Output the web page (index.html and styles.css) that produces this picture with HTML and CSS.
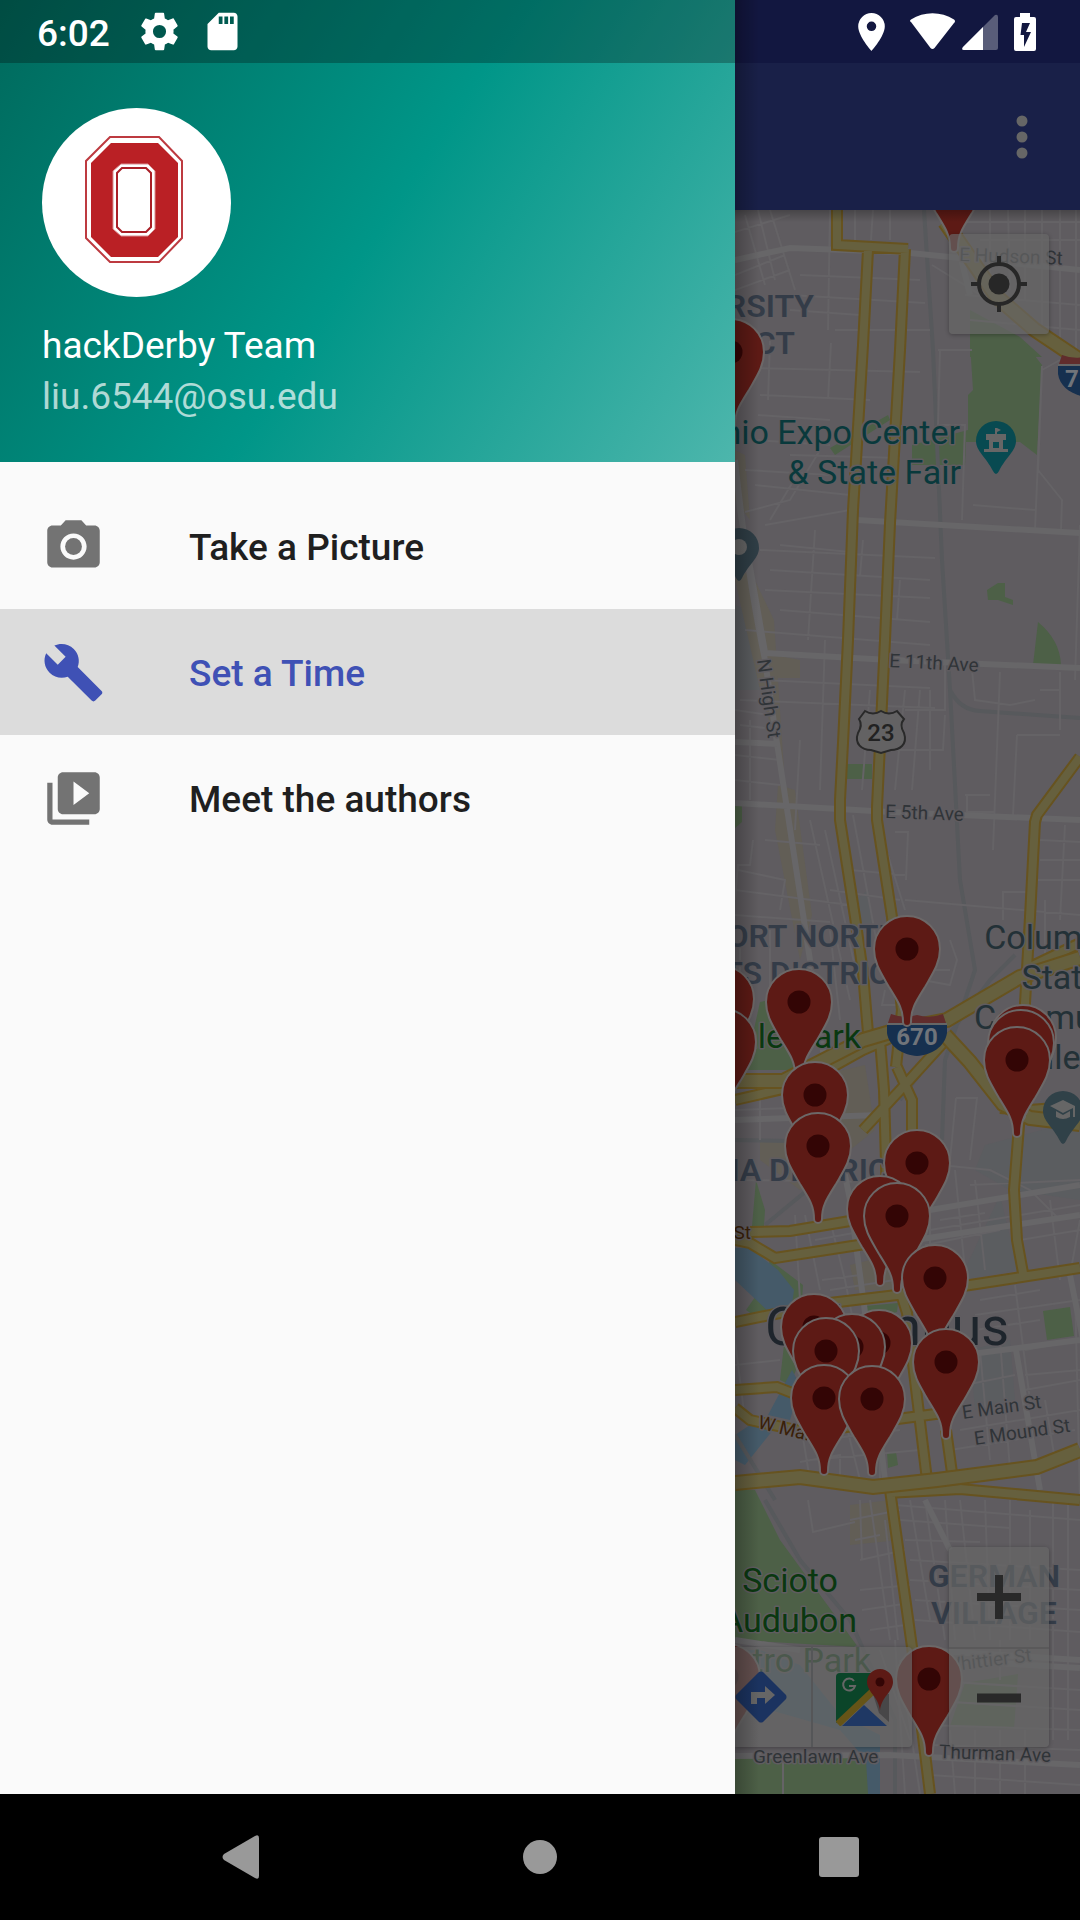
FILE: index.html
```html
<!DOCTYPE html>
<html lang="en">
<head>
<meta charset="utf-8">
<meta name="viewport" content="width=device-width, initial-scale=1">
<title>hackDerby</title>
<link rel="stylesheet" href="styles.css">
</head>
<body>
<div class="screen">
  <div class="status-bar">
    <div class="status-left">
      <span class="clock">6:02</span>
      <svg class="status-icon" viewBox="0 0 24 24"><path d="M19.4 13c0-.3.1-.6.1-1s0-.7-.1-1l2.100-1.650c.2-.15.25-.42.12-.64l-2-3.460c-.12-.22-.39-.3-.61-.22l-2.490 1c-.52-.4-1.080-.73-1.690-.98l-.38-2.650A.49.49 0 0 0 14 2h-4c-.25 0-.46.18-.49.42l-.38 2.650c-.61.25-1.170.59-1.690.98l-2.490-1c-.23-.09-.49 0-.61.22l-2 3.460c-.13.22-.07.49.12.64L4.570 11c-.04.32-.07.65-.07 1s.03.66.07 1l-2.110 1.650c-.19.15-.24.42-.12.64l2 3.460c.12.22.39.3.61.22l2.490-1c.52.4 1.080.73 1.690.98l.38 2.650c.03.24.24.42.49.42h4c.25 0 .46-.18.49-.42l.38-2.650c.61-.25 1.170-.59 1.690-.98l2.490 1c.23.09.49 0 .61-.22l2-3.460c.12-.22.07-.49-.12-.64zM12 15.500a3.500 3.500 0 1 1 0-7 3.500 3.500 0 0 1 0 7z"/></svg>
      <svg class="status-icon" viewBox="0 0 24 24"><path d="M18 2h-8L4 8v12c0 1.100.9 2 2 2h12c1.100 0 2-.9 2-2V4c0-1.100-.9-2-2-2zm-6 6h-2V4h2v4zm3 0h-2V4h2v4zm3 0h-2V4h2v4z"/></svg>
    </div>
    <div class="status-right">
      <svg width="27" height="38" viewBox="5 2 14 20"><path d="M12 2a7 7 0 0 0-7 7c0 5.250 7 13 7 13s7-7.750 7-13a7 7 0 0 0-7-7zm0 9.500a2.500 2.500 0 1 1 0-5 2.500 2.500 0 0 1 0 5z"/></svg>
      <svg class="wifi" width="45" height="37" viewBox="0 0 45 37"><path d="M1 9Q-1 8 1 6.500C14-2 31-2 44 6.500Q46 8 44 10L24.500 35Q22.500 37 20.500 35z"/></svg>
      <svg class="signal" width="36" height="36" viewBox="0 0 36 36"><path opacity=".3" d="M1 33L33 1Q36 0 36 3V34Q36 36 34 36H2Q-1 36 1 33z"/><path d="M1 33L21 13V36H2Q-1 36 1 33z"/></svg>
      <svg class="battery" width="22" height="38" viewBox="0 0 22 38"><path fill-rule="evenodd" d="M6 0H16V4H20Q22 4 22 6V36Q22 38 20 38H2Q0 38 0 36V6Q0 4 2 4H6zM8 10L6.500 22H10V34L17 19H12L16 10z"/></svg>
    </div>
  </div>

  <div class="body">
    <nav class="drawer">
      <header class="drawer-header">
        <svg class="avatar" viewBox="0 0 189 189" role="img" aria-label="Profile picture">
          <circle cx="94.500" cy="94.500" r="94.500" fill="#fff"/>
          <path d="M68 29H117L140 53V130L117 154H68L44 130V53z" fill="#fff" stroke="#bd3a40" stroke-width="2"/>
          <path d="M69 35H116L136 55V129L116 149H69L49 129V55z" fill="#ba2025"/>
          <path d="M79 56H106L113 63V121L106 128H79L71 121V63z" fill="#fff" stroke="#d98b8e" stroke-width="1"/>
          <path d="M80 60H104L109 65V119L104 124H80L75 119V65z" fill="#fff" stroke="#a91f27" stroke-width="2"/>
        </svg>
        <div class="name">hackDerby Team</div>
        <div class="email">liu.6544@osu.edu</div>
      </header>
      <div class="menu">
        <a class="item" href="#picture">
          <svg viewBox="0 0 24 24"><circle cx="12" cy="12" r="3.200"/><path d="M9 2L7.170 4H4c-1.100 0-2 .9-2 2v12c0 1.100.9 2 2 2h16c1.100 0 2-.9 2-2V6c0-1.100-.9-2-2-2h-3.170L15 2H9zm3 15c-2.760 0-5-2.240-5-5s2.240-5 5-5 5 2.240 5 5-2.240 5-5 5z"/></svg>
          <span>Take a Picture</span></a>
        <a class="item selected" href="#time" aria-current="page">
          <svg viewBox="0 0 24 24"><path d="M22.700 19l-9.100-9.100c.9-2.300.4-5-1.500-6.900-2-2-5-2.400-7.400-1.300L9 6 6 9 1.600 4.700C.4 7.100.9 10.100 2.900 12.100c1.900 1.900 4.600 2.400 6.900 1.500l9.100 9.100c.4.4 1 .4 1.400 0l2.300-2.300c.5-.4.5-1.100.1-1.400z"/></svg>
          <span>Set a Time</span></a>
        <a class="item" href="#authors">
          <svg viewBox="0 0 24 24"><path d="M4 6H2v14c0 1.100.9 2 2 2h14v-2H4V6zm16-4H8c-1.100 0-2 .9-2 2v12c0 1.100.9 2 2 2h12c1.100 0 2-.9 2-2V4c0-1.100-.9-2-2-2zm-8 12.500v-9l6 4.500-6 4.500z"/></svg>
          <span>Meet the authors</span></a>
      </div>
    </nav>

    <main class="content">
      <div class="app-bar">
        <button class="overflow" aria-label="More options"><svg width="12" height="44" viewBox="0 0 12 44"><circle cx="6" cy="6" r="5.500"/><circle cx="6" cy="22" r="5.500"/><circle cx="6" cy="38" r="5.500"/></svg></button>
      </div>
      <div class="map">
        <svg class="map-canvas" viewBox="735 210 345 1584" preserveAspectRatio="xMinYMin slice">
          <defs>
            <g id="pin"><path d="M-33 0A33 33 0 0 1 33 0C33 14 26 24 18 38C8 54 4 60 4 73A4 4 0 0 1-4 73C-4 60-8 54-18 38C-26 24-33 14-33 0Z" fill="#5d1a15" stroke="#6c6868" stroke-width="2"/><circle r="11.500" fill="#330505"/></g>
            <g id="poi"><path d="M-20 0A20 20 0 0 1 20 0C20 10 10 16 3 30Q0 36-3 30C-10 16-20 10-20 0Z"/></g>
            <g id="shield"><path d="M-30-11H30V-2C28 12 14 20 0 21C-14 20-28 12-30-2Z" fill="#16304f"/><path d="M-29-12L-26-21Q-13-16 0-20Q13-16 26-21L29-12Z" fill="#602c2c"/><path d="M-30-11H30" stroke="#666" stroke-width="2"/></g>
          </defs>

          <!-- land use -->
          <g class="area">
            <path fill="#5b5d60" d="M735 605L752 612 765 690H735zM985 1145L1080 1120V1200L1010 1190 975 1170zM1000 1195L1013 1250 1020 1270 960 1280zM970 1350L1010 1340 1015 1400 975 1410zM855 900L868 890 872 930 858 935z"/>
            <path fill="#625e56" d="M735 450L745 455 750 520 735 500zM735 580L750 570 774 620 784 770 760 690zM775 655L800 660V678H778zM778 785L795 790 812 915 800 960 775 830zM800 1080L865 1065 875 1130 800 1190 760 1160V1140H795zM850 1265L890 1255 895 1290H855zM850 1505L890 1500 900 1540 850 1545z"/>
            <path fill="#4d6047" d="M970 343L990 337H1020L1042 365 1037 455 1020 442H966L965 465H912V445L968 430V395L973 390zM987 590L998 583H1005V597L1013 600V605L998 600H988zM1038 622Q1060 640 1061 665H1033zM847 764H872V779H847zM735 806H742V822L735 828zM760 1002L770 1000 797 1070H745zM756 1180L765 1210 764 1226H752zM770 1260L803 1285 802 1300 780 1305 760 1320 746 1310 760 1290zM865 1306L898 1303 897 1312 866 1320zM784 1345L798 1365 790 1385 780 1380zM1043 1311L1070 1307 1074 1336 1047 1340zM887 1452H896L898 1465 888 1468zM735 1490H755L780 1540 858 1647 735 1640zM735 1758H870V1794H735zM965 1683L1018 1674 1014 1729 950 1726zM830 448L888 415 890 420 835 455zM970 310L1020 337 1042 357H970z"/>
            <path fill="#455a69" d="M735 1248H750L778 1270 794 1290 792 1305 770 1313 735 1280zM776 1400L792 1370 800 1385 790 1420 768 1415zM735 1435L750 1425 773 1430 745 1465 735 1460zM735 1650H760L800 1665 840 1715 880 1735V1794H868L866 1760 840 1730 735 1700z"/>
          </g>

          <!-- rail lines -->
          <path class="rail" d="M924 210L933 350 942 560 950 690 960 880 975 970 945 1060 942 1140M950 690Q960 710 980 711L1080 718M735 1140L790 1141 830 1160M735 1435L775 1500M1015 955L990 980 900 1100M765 1500L800 1560 850 1620 895 1720V1794M765 1225L805 1192"/>

          <!-- side streets -->
          <path class="minor" d="M735 232L790 215M735 262L770 250M735 290L790 270M745 215L765 285M758 210L775 280M770 210L795 290M735 275L785 255M790 455L900 458M790 310L860 315M800 275L920 280M790 295L925 303M830 210L828 330M855 210V240M873 210L871 240M890 210V240M835 330H930M831 343L828 400M770 340L768 400M755 368L920 372M760 395L870 400M758 415L830 420M755 440L830 445M745 470L830 475M755 485L850 495M745 512L790 500 820 450M770 520L800 470M765 525L850 510M780 545L850 552M760 550L935 558M770 570L930 580M765 590L930 598M780 610L930 622M745 630L930 645M760 680L930 688M740 700L935 708M815 530L808 640M863 540L860 576M900 580L897 620M825 640L820 790M870 690L862 790M905 690L895 790M920 690L912 790M930 690L930 770M880 655L945 665V710H905M895 750H943L945 715M940 350L938 425H965L962 520M938 350H972M1042 366L1035 530M1060 360L1042 370 1038 470 1062 500 1061 530M1080 525L1075 680M973 505L1035 510M972 670L975 700 1010 705 1035 700M1000 672L993 850M1060 672V730M1017 735H1060M1017 735L1013 815M965 795H990M967 812H995M967 795V812M1040 690H1060M735 710L770 715M740 725L765 728M735 755L780 760M735 780L780 785M750 720V800M800 740L795 830M765 840L820 845M753 840L750 865H738L735 900M738 870L785 880 780 910M735 890L850 905M735 915L830 922M810 820L850 1000M825 830L860 990M853 815L880 960M880 830L905 910M895 832H908L906 880M850 870L905 875M830 890L900 900M905 900L1080 915M1040 840L1080 842M1040 860H1080M1038 880H1080M1065 825L1060 920M1003 920V892H1030M1045 960V900M740 940V1000M770 930V1010M830 930L840 1020M950 940L957 960 950 985 895 975M885 990L882 1005H900M950 970H895M760 1095V1140M795 1095V1120M735 1110L790 1108M735 1180L880 1182M956 1098H977L970 1160M956 1098L950 1160M940 1165L990 1170 1030 1190 1060 1220M970 1185L1080 1180M930 1165V1270M955 1170L965 1270M975 1180L985 1270M930 1230L1080 1205M925 1245L1000 1230M940 1220L985 1213M1050 1200L1060 1280M1080 1220L1070 1275M1020 1240L1080 1230M830 1220L845 1280 855 1330M805 1215L820 1290M795 1215L800 1300M815 1240L870 1230M825 1255L880 1245M822 1280L860 1275M830 1290L895 1280M980 1300L1040 1290M975 1315L1080 1300M975 1330L1040 1320M1025 1350L1080 1340M1025 1375L1080 1370M1025 1390L1080 1380M965 1385L1015 1375M1075 1290L1080 1500M980 1350L990 1460M1000 1340L1010 1470M1045 1400L1055 1460M1015 1285L1030 1400M960 1430L1080 1410M950 1450L1075 1430M735 1340L745 1420M800 1420L810 1480M820 1440L900 1430M810 1460L920 1450M845 1420L860 1480M880 1420V1480M800 1462L840 1455V1480M735 1365L780 1360"/>
          <path class="minor" d="M808 1500L813 1532 855 1522M855 1540L880 1535M850 1520L900 1510M860 1560L905 1550M860 1500L862 1560M870 1500L890 1640M885 1520L898 1640M860 1590L910 1585M862 1610L910 1603M870 1630L905 1625M895 1505L1080 1520M900 1520L1010 1528M905 1540L980 1542M910 1560L1080 1570M910 1580L1080 1590M915 1600L1080 1610M915 1620L1080 1632M920 1680L1080 1690M920 1700L1080 1710M925 1725L1080 1730M930 1745L1080 1750M930 1775L1080 1785M910 1500L930 1620M925 1500L945 1640M945 1500L955 1640M960 1500L975 1640M985 1500L990 1640M1010 1500V1640M1030 1510V1640M1053 1500V1740M1068 1500V1740M1000 1640V1680M975 1730V1794M1000 1730V1794M1025 1730V1794M950 1730L955 1794M900 1660L920 1794M895 1640L905 1794M880 1650L910 1740M783 1760V1794M932 265L1070 350M965 295L1080 305M970 320L1080 330M990 210V290M1008 210L1010 290M1025 210V300M1042 210V340M1060 210V350M1076 210V350M960 222H1080M980 240H1080"/>
          <path class="street" d="M735 460Q748 580 765 660L775 730 810 960 830 1100 850 1200 870 1350 885 1480M735 460L740 510 765 652M735 260L790 248 900 252 1080 270M857 520L1080 533M765 653L890 660 1080 668M735 742L778 744M735 803L890 812 1080 820M735 1120L880 1115M900 1215L1080 1185M915 1240L1080 1215M925 1360L1080 1340M1070 1275L1085 1350M735 1756L890 1755 1080 1765M920 1650L1080 1660M925 1500L950 1550M1016 1350L1040 1490M945 1660L1080 1668M735 1640L800 1650M943 213L953 225 970 295"/>

          <!-- highways: casing, then fill -->
          <g class="highway">
            <path id="hw" d="M837 210V245L908 249M868 250L863 345 853 510 848 640 843 743 840 800V820L855 917 863 973 868 1033M905 249L900 350 890 523 885 640 877 807V820L892 917 902 1010 896 1067M1080 757L1037 815 1035 822 1030 917 1025 1003 1020 1113 1014 1190 1017 1240 1023 1273M735 1100L800 1085 863 1050 897 1035M880 1040L884 1090 887 1200M943 1043L903 1087 863 1130M897 1067L912 1100V1140M750 1232L790 1231 850 1221M735 1240L750 1243 775 1258 865 1244M735 1322L830 1303 897 1295 970 1285 1080 1268M902 1297L907 1313 917 1397 927 1480M735 1390L777 1387 810 1400M735 1408L750 1420 810 1433 890 1420 943 1413M946 1430L953 1480M887 1493L960 1489 1080 1500M890 1490L912 1647 930 1794M1000 1108L1030 1110 1080 1106M1030 967L1080 943"/>
          </g>
          <g class="highway inner"><use href="#hw"/></g>
          <path class="freeway-case" d="M945 222L997 297 1035 330 1080 360M735 1081L783 1081 863 1040 897 1030 947 1020 1020 977 1080 958M945 1035L970 1062 1003 1104 1030 1118 1080 1124M735 1483L800 1477 873 1487 937 1480 1037 1467 1080 1450"/>
          <path class="freeway" d="M945 222L997 297 1035 330 1080 360M735 1081L783 1081 863 1040 897 1030 947 1020 1020 977 1080 958M945 1035L970 1062 1003 1104 1030 1118 1080 1124M735 1483L800 1477 873 1487 937 1480 1037 1467 1080 1450"/>

          <!-- labels -->
          <g class="label district">
            <text x="814" y="317" text-anchor="end">UNIVERSITY</text>
            <text x="795" y="354" text-anchor="end">DISTRICT</text>
            <text x="901" y="947" text-anchor="end">SHORT NORTH</text>
            <text x="909" y="984" text-anchor="end">ARTS DISTRICT</text>
            <text x="908" y="1181" text-anchor="end">ARENA DISTRICT</text>
            <text x="994" y="1587" text-anchor="middle">GERMAN</text>
            <text x="994" y="1624" text-anchor="middle">VILLAGE</text>
          </g>
          <g class="label place expo">
            <text x="960" y="444" text-anchor="end">Ohio Expo Center</text>
            <text x="961" y="484" text-anchor="end">&amp; State Fair</text>
          </g>
          <g class="label place park">
            <text x="861" y="1048" text-anchor="end">Goodale Park</text>
            <text x="838" y="1592" text-anchor="end">Scioto</text>
            <text x="857" y="1632" text-anchor="end">Audubon</text>
            <text x="871" y="1672" text-anchor="end">Metro Park</text>
          </g>
          <g class="label place college">
            <text x="1061" y="949" text-anchor="middle">Columbus</text>
            <text x="1061" y="989" text-anchor="middle">State</text>
            <text x="1061" y="1029" text-anchor="middle">Community</text>
            <text x="1061" y="1069" text-anchor="middle">College</text>
          </g>
          <text class="label city" x="765" y="1345">Columbus</text>
          <g class="label road">
            <text transform="translate(959 261) rotate(2)">E Hudson St</text>
            <text transform="translate(889 667) rotate(3)">E 11th Ave</text>
            <text transform="translate(885 818) rotate(2)">E 5th Ave</text>
            <text transform="translate(757 660) rotate(82)">N High St</text>
            <text transform="translate(963 1419) rotate(-8)">E Main St</text>
            <text transform="translate(975 1445) rotate(-8)">E Mound St</text>
            <text transform="translate(945 1672) rotate(-7)">Whittier St</text>
            <text x="753" y="1763">Greenlawn Ave</text>
            <text transform="translate(939 1758) rotate(2)">Thurman Ave</text>
          </g>
          <g class="label road major">
            <text x="751" y="1239" text-anchor="end">W Broad St</text>
            <text transform="translate(757 1428) rotate(14)">W Main</text>
          </g>

          <!-- route shields -->
          <use href="#shield" x="917" y="1035"/>
          <text class="shield-text" x="917" y="1045" text-anchor="middle">670</text>
          <use href="#shield" x="1088" y="376"/>
          <text class="shield-text" x="1065" y="387">71</text>
          <path d="M859 719L865 711Q873 716 881 711Q889 716 897 711L904 719Q899 725 904 733C908 745 899 750 891 750L881 753 871 750C862 750 854 744 858 733Q863 725 859 719Z" fill="#636263" stroke="#292929" stroke-width="2"/>
          <text class="us-route" x="881" y="741" text-anchor="middle">23</text>

          <!-- points of interest -->
          <use href="#poi" x="996" y="441" fill="#084a51"/>
          <path d="M995 428V434H986V440H989V449H984V452H1008V449H1003V440H1006V434H997V432L1001 430 997 428zM993 442H999V448H993z" fill="#666" fill-rule="evenodd"/>
          <use href="#poi" x="739" y="548" fill="#2f3e46"/><circle cx="739" cy="547" r="8" fill="#666"/>
          <use href="#poi" x="1063" y="1111" fill="#304148"/>
          <path d="M1050 1106L1063 1100 1075 1106V1117H1073V1108L1063 1113zM1056 1111L1063 1115 1070 1111V1117Q1063 1121 1056 1117z" fill="#666"/>

          <!-- markers -->
          <use href="#pin" x="954" y="175"/><use href="#pin" x="731" y="352"/>
          <use href="#pin" x="721" y="999"/><use href="#pin" x="723" y="1042"/>
          <use href="#pin" x="907" y="949"/><use href="#pin" x="799" y="1002"/>
          <use href="#pin" x="1023" y="1038"/><use href="#pin" x="1021" y="1043"/><use href="#pin" x="1017" y="1060"/>
          <use href="#pin" x="815" y="1095"/><use href="#pin" x="818" y="1146"/>
          <use href="#pin" x="917" y="1163"/><use href="#pin" x="880" y="1209"/><use href="#pin" x="897" y="1216"/>
          <use href="#pin" x="935" y="1278"/><use href="#pin" x="814" y="1327"/>
          <use href="#pin" x="879" y="1343"/><use href="#pin" x="852" y="1347"/><use href="#pin" x="826" y="1351"/>
          <use href="#pin" x="946" y="1362"/><use href="#pin" x="824" y="1398"/><use href="#pin" x="872" y="1399"/>
          <use href="#pin" x="727" y="1677"/><use href="#pin" x="929" y="1679"/>
        </svg>

        <button class="control locate" aria-label="My location">
          <svg width="56" height="56" viewBox="0 0 56 56"><circle cx="28" cy="28" r="20" fill="none" stroke="#272727" stroke-width="4"/><circle cx="28" cy="28" r="10.500" fill="#272727"/><path d="M28 0V10M28 46V56M0 28H10M46 28H56" stroke="#272727" stroke-width="4"/></svg>
        </button>
        <div class="control zoom">
          <button aria-label="Zoom in"><svg width="44" height="44" viewBox="0 0 44 44"><path d="M0 22H44M22 0V44" stroke="#292929" stroke-width="8"/></svg></button>
          <button aria-label="Zoom out"><svg width="44" height="44" viewBox="0 0 44 44"><path d="M0 22H44" stroke="#292929" stroke-width="9"/></svg></button>
        </div>
        <div class="control tools">
          <button aria-label="Directions"><svg width="52" height="52" viewBox="0 0 52 52"><path d="M24 1Q26 0 28 1L51 24Q52 26 51 28L28 51Q26 52 24 51L1 28Q0 26 1 24z" fill="#1b3360"/><path d="M19 33V24H36" fill="none" stroke="#666" stroke-width="6"/><path d="M30 15L40 24 30 33z" fill="#666"/></svg></button>
          <button aria-label="Open in Google Maps"><svg width="57" height="57" viewBox="0 0 57 57"><path d="M4 4H36L44 36 53 48V56H4Q0 56 0 52V8Q0 4 4 4z" fill="#626162"/><path d="M4 4H36L40 18 0 54V8Q0 4 4 4z" fill="#0b4529"/><path d="M36 22L43 44 53 53V25z" fill="#484748"/><path d="M28 36L51 57H6z" fill="#1f3864"/><path d="M2 55L37 22" stroke="#665417" stroke-width="7"/><path d="M18 12A6 6 0 1 0 19 17H13" fill="none" stroke="#666" stroke-width="2"/><path d="M31 13A13 13 0 0 1 57 13C57 23 45 28 44 42C43 28 31 23 31 13Z" fill="#5d1a15"/><circle cx="44" cy="13" r="4.500" fill="#330505"/></svg></button>
        </div>
      </div>
    </main>
  </div>

  <div class="nav-bar">
    <button aria-label="Back"><svg width="38" height="44" viewBox="0 0 38 44"><path d="M33 1Q37-1 37 3V41Q37 45 33 43L2 25Q-1 22 2 19z"/></svg></button>
    <button aria-label="Home"><svg width="36" height="36" viewBox="0 0 36 36"><circle cx="18" cy="18" r="17"/></svg></button>
    <button aria-label="Recent apps"><svg width="40" height="40" viewBox="0 0 40 40"><rect width="40" height="40" rx="3"/></svg></button>
  </div>
</div>
</body>
</html>
```
FILE: styles.css
```css
* { box-sizing: border-box; }
body { margin: 0; font-family: Roboto, "Liberation Sans", sans-serif; background: #000; }
button { border: 0; padding: 0; background: none; display: flex; align-items: center; justify-content: center; cursor: pointer; }
svg { display: block; flex-shrink: 0; }

.screen { position: relative; min-height: 100vh; display: flex; flex-direction: column; }

.status-bar {
  position: absolute; top: 0; left: 0; right: 0; z-index: 2;
  height: 63px; padding: 0 44px 0 37px;
  display: flex; justify-content: space-between; align-items: center;
  color: #fff; fill: #fff;
  background: rgba(0, 0, 0, .27);
}
.status-left, .status-right { display: flex; align-items: center; }
.status-left { gap: 18px; }
.status-right { gap: 7px; }
.clock { font-size: 37px; line-height: 44px; font-weight: 500; padding: 4px 9px 0 0; }
.status-icon { width: 45px; height: 45px; }
.wifi { margin-left: 18px; }
.signal { margin-right: 9px; }

.body { flex: 1; display: grid; grid-template-columns: minmax(0, 735px) minmax(0, 1fr); }

.drawer { background: #fafafa; }
.drawer-header {
  padding: 108px 42px 40px;
  color: #fff;
  background: linear-gradient(123deg, #00695c, #009688 51%, #4db6ac);
}
.avatar { width: 189px; height: 189px; margin-bottom: 23px; }
.name, .email { font-size: 37px; line-height: 51px; }
.email { color: rgba(255, 255, 255, .7); }
.menu { padding-top: 21px; }
.item {
  display: flex; align-items: center; gap: 84px;
  height: 126px; padding: 0 42px;
  font-size: 37px; font-weight: 500; text-decoration: none;
  color: #1f1f1f;
}
.item svg { width: 63px; height: 63px; fill: #737373; }
.item span { padding-top: 2px; }
.selected { background: #dcdcdc; color: #3f51b5; }
.item.selected svg { fill: #3f51b5; }

.content { position: relative; display: flex; flex-direction: column; }
.content::after {
  content: ""; position: absolute; top: 0; bottom: 0; left: 0; width: 24px;
  background: linear-gradient(90deg, rgba(0, 0, 0, .25), transparent);
  pointer-events: none;
}
.app-bar {
  height: 210px; padding: 63px 36px 0 0;
  display: flex; justify-content: flex-end; align-items: center;
  background: linear-gradient(#1a2058 63px, #192048 63px);
}
.overflow { width: 44px; height: 96px; fill: #666; }

.map { position: relative; flex: 1; display: flex; background: #5f5c60; overflow: hidden; }
.map::after {
  content: ""; position: absolute; top: 0; left: 0; right: 0; height: 12px;
  background: linear-gradient(rgba(0, 0, 0, .25), transparent);
}
.map-canvas { width: 100%; min-width: 0; }
.rail { fill: none; stroke: #57595c; stroke-width: 4; }
.minor { fill: none; stroke: #656366; stroke-width: 2; }
.street { fill: none; stroke: #676668; stroke-width: 6; }
.highway { fill: none; stroke: #67531f; stroke-width: 12; }
.inner { stroke: #66603e; stroke-width: 8; }
.freeway-case { fill: none; stroke: #67531f; stroke-width: 16; }
.freeway { fill: none; stroke: #66603e; stroke-width: 12; }
.label { paint-order: stroke; stroke: #5f5c60; stroke-width: 3; stroke-linejoin: round; }
.district { font-size: 32px; font-weight: 600; fill: #343c48; }
.place { font-size: 34px; }
.expo { fill: #09393c; }
.park { fill: #0a3810; }
.college { fill: #233137; }
.city { font-size: 54px; fill: #1e252c; }
.road { font-size: 19px; fill: #303438; }
.major { fill: #3a2008; }
.shield-text { font-size: 24px; font-weight: 700; fill: #70747a; }
.us-route { font-size: 24px; font-weight: 500; fill: #222; }

.control { position: absolute; background: rgba(102, 102, 102, .7); border-radius: 4px; box-shadow: 0 1px 4px rgba(0, 0, 0, .3); }
.locate { top: 24px; right: 31px; width: 100px; height: 100px; }
.zoom { right: 31px; bottom: 47px; width: 100px; }
.zoom button { width: 100%; height: 100px; }
.zoom button + button { border-top: 2px solid #5a595a; }
.tools { left: 0; bottom: 47px; width: 177px; height: 100px; display: flex; border-radius: 0 4px 4px 0; }
.tools button { width: 76px; justify-content: flex-start; }
.tools button + button { flex: 1; border-left: 2px solid #555658; justify-content: center; padding-left: 4px; }

.nav-bar {
  height: 126px; padding: 0 92px;
  display: grid; grid-template-columns: repeat(3, 1fr);
  background: #000;
}
.nav-bar button { fill: #999; }
```
